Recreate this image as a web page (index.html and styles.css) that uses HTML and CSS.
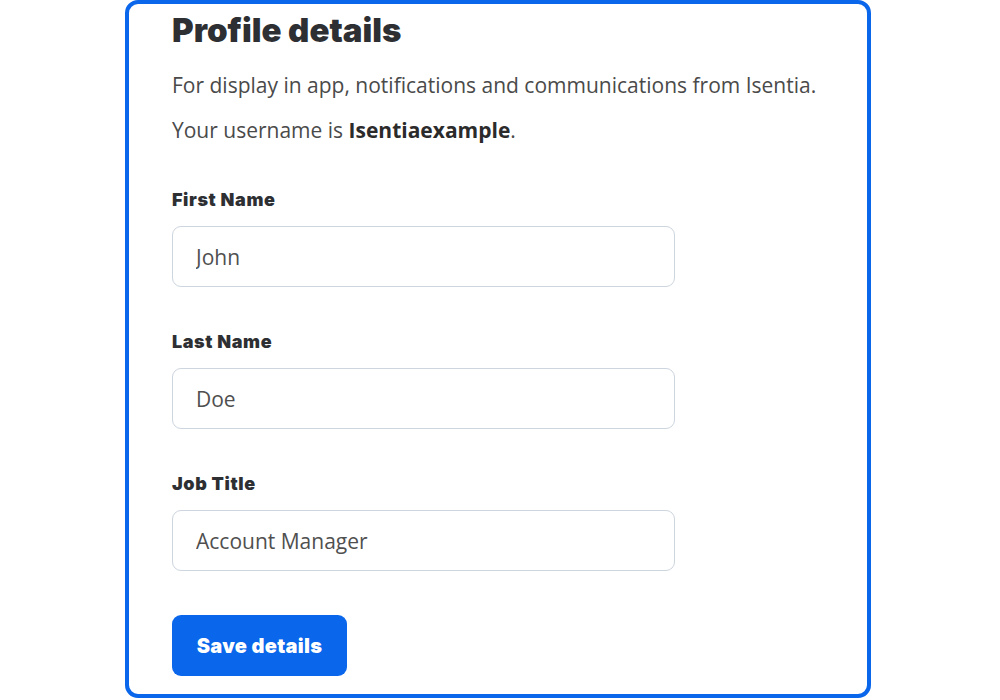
FILE: index.html
```html
<!DOCTYPE html>
<html lang="en">
<head>
<meta charset="utf-8">
<title>Profile details</title>
<link rel="stylesheet" href="styles.css">
</head>
<body>
<main class="card">
  <h1 class="title">Profile details</h1>
  <p class="text">For display in app, notifications and communications from Isentia.</p>
  <p class="text">Your username is <strong>Isentiaexample</strong>.</p>
  <form class="form">
    <div class="field">
      <label class="label" for="first">First Name</label>
      <input class="input" id="first" type="text" value="John">
    </div>
    <div class="field">
      <label class="label" for="last">Last Name</label>
      <input class="input" id="last" type="text" value="Doe">
    </div>
    <div class="field">
      <label class="label" for="job">Job Title</label>
      <input class="input" id="job" type="text" value="Account Manager">
    </div>
    <button class="button" type="button">Save details</button>
  </form>
</main>
</body>
</html>
```
FILE: styles.css
```css
* { box-sizing: border-box; }
html, body { margin: 0; padding: 0; background: #ffffff; }
body { font-family: "Open Sans", "Noto Sans", sans-serif; color: #3a3a3a; }
.card {
  margin: 0 0 0 125px;
  width: 746px;
  height: 698px;
  border: 4px solid #0a66ea;
  border-radius: 13px;
  padding: 6px 43px 0 43px;
}
.title {
  margin: 0;
  font-family: "Inter", sans-serif;
  font-weight: 900;
  font-size: 33px;
  line-height: 40px;
  color: #2d2f33;
}
.text {
  margin: 0;
  font-size: 21px;
  line-height: 28px;
  color: #4a4a4a;
  margin-top: 21px;
}
.text + .text { margin-top: 17px; }
.text strong { font-weight: 700; color: #2b2b2b; }
.form { margin-top: 44px; display: flex; flex-direction: column; align-items: flex-start; }
.field { display: flex; flex-direction: column; margin-bottom: 43px; }
.label {
  font-family: "Inter", sans-serif;
  font-weight: 900;
  font-size: 18px;
  letter-spacing: 0.6px;
  line-height: 24px;
  color: #2d2f33;
  margin-bottom: 14px;
}
.input {
  width: 503px;
  height: 61px;
  border: 1px solid #cdd5df;
  border-radius: 9px;
  padding: 0 23px;
  font-family: "Open Sans", "Noto Sans", sans-serif;
  font-size: 21px;
  color: #4f4f4f;
  background: #fff;
  outline: none;
}
.button {
  margin-top: 1px;
  width: 175px;
  height: 61px;
  border: none;
  border-radius: 9px;
  background: #0a66ea;
  color: #ffffff;
  font-family: "Inter", sans-serif;
  font-weight: 900;
  font-size: 20px;
  letter-spacing: 0.3px;
  cursor: pointer;
}
```
